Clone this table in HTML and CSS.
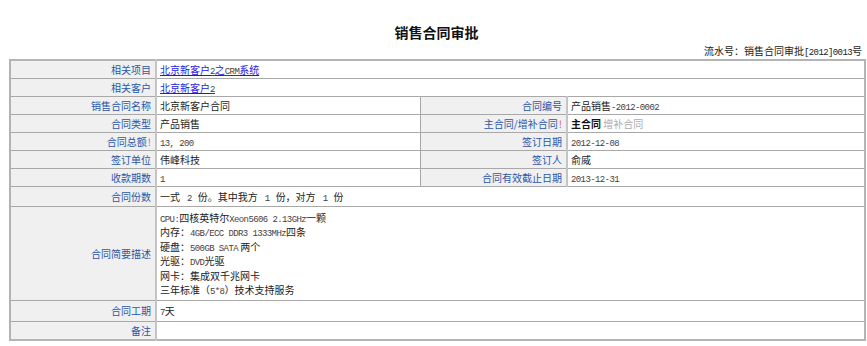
FILE: index.html
```html
<!DOCTYPE html>
<html lang="zh-CN">
<head>
<meta charset="utf-8">
<title>销售合同审批</title>
<link rel="stylesheet" href="styles.css">
</head>
<body>
<div class="page">
  <h1 class="title">销售合同审批</h1>
  <div class="serial">流水号：销售合同审批<span class="num">[2012]0013</span>号</div>
  <table class="form">
    <colgroup>
      <col class="c1"><col class="c2"><col class="c3"><col class="c4">
    </colgroup>
    <tr>
      <th>相关项目</th>
      <td colspan="3"><a href="#" class="link">北京新客户<span class="num">2</span>之<span class="num">CRM</span>系统</a></td>
    </tr>
    <tr>
      <th>相关客户</th>
      <td colspan="3"><a href="#" class="link">北京新客户<span class="num">2</span></a></td>
    </tr>
    <tr>
      <th>销售合同名称</th>
      <td>北京新客户合同</td>
      <th>合同编号</th>
      <td>产品销售<span class="num">-2012-0002</span></td>
    </tr>
    <tr>
      <th>合同类型</th>
      <td>产品销售</td>
      <th>主合同/增补合同<span class="req">!</span></th>
      <td><b class="on">主合同</b> <span class="off">增补合同</span></td>
    </tr>
    <tr>
      <th>合同总额<span class="req">!</span></th>
      <td><span class="num">13, 200</span></td>
      <th>签订日期</th>
      <td><span class="num">2012-12-08</span></td>
    </tr>
    <tr>
      <th>签订单位</th>
      <td>伟峰科技</td>
      <th>签订人</th>
      <td>俞威</td>
    </tr>
    <tr>
      <th>收款期数</th>
      <td><span class="num">1</span></td>
      <th>合同有效截止日期</th>
      <td><span class="num">2013-12-31</span></td>
    </tr>
    <tr class="tall">
      <th>合同份数</th>
      <td colspan="3">一式<span class="num gap">2</span>份。其中我方<span class="num gap">1</span>份，对方<span class="num gap">1</span>份</td>
    </tr>
    <tr class="desc">
      <th>合同简要描述</th>
      <td colspan="3">
        <div class="lines">
          <div><span class="num">CPU:</span>四核英特尔<span class="num">Xeon5606 2.13GHz</span>一颗</div>
          <div>内存：<span class="num">4GB/ECC DDR3 1333MHz</span>四条</div>
          <div>硬盘：<span class="num">500GB SATA</span> 两个</div>
          <div>光驱：<span class="num">DVD</span>光驱</div>
          <div>网卡：集成双千兆网卡</div>
          <div>三年标准（<span class="num">5*8</span>）技术支持服务</div>
        </div>
      </td>
    </tr>
    <tr class="period">
      <th>合同工期</th>
      <td colspan="3"><span class="num">7</span>天</td>
    </tr>
    <tr>
      <th>备注</th>
      <td colspan="3"></td>
    </tr>
  </table>
</div>
</body>
</html>
```
FILE: styles.css
```css
html, body {
  margin: 0;
  padding: 0;
  background: #ffffff;
}

.page {
  padding: 22px 3px 0 9px;
  font-family: "Noto Sans CJK SC", "Noto Sans", sans-serif;
  font-size: 10px;
  color: #222;
}

.title {
  margin: 0;
  font-size: 14px;
  line-height: 20px;
  font-weight: bold;
  text-align: center;
  color: #111;
}

.serial {
  margin-top: 3px;
  text-align: right;
  line-height: 12px;
  padding-right: 2px;
  color: #222;
}

.num {
  font-family: "Liberation Mono", "DejaVu Sans Mono", monospace;
  font-size: 9px;
  letter-spacing: -0.6px;
  line-height: 1;
}

.gap {
  margin: 0 6px 0 7px;
}

.form {
  margin-top: 1px;
  width: 855px;
  border-collapse: collapse;
  table-layout: fixed;
  border: 2px solid #b4b4b4;
}

.c1 { width: 146px; }
.c2 { width: 264px; }
.c3 { width: 147px; }
.c4 { width: 298px; }

.form th,
.form td {
  border: 1px solid #a8a8a8;
  height: 17px;
  padding: 0 3px;
  line-height: 14px;
  vertical-align: middle;
  white-space: nowrap;
}

.form th {
  background: #f0f0f0;
  color: #2b55a8;
  font-weight: normal;
  text-align: right;
  padding-right: 4px;
  border-right: 2px solid #c4c4c4;
}

.form td {
  background: #ffffff;
  text-align: left;
  color: #222;
}

.form td .num {
  color: #4a3c3c;
}

.link,
.link .num {
  color: #1a1ae0;
  text-decoration: underline;
}

.req {
  color: #d06080;
  margin-left: 1px;
}

.on {
  font-weight: bold;
  color: #111;
}

.off {
  color: #aaaaaa;
}

.tall td,
.tall th {
  height: 19px;
}

.desc td,
.desc th {
  height: 92px;
  padding-top: 1px;
  padding-bottom: 0;
}

.lines {
  line-height: 14.5px;
}

.period td,
.period th {
  height: 20px;
}
```
